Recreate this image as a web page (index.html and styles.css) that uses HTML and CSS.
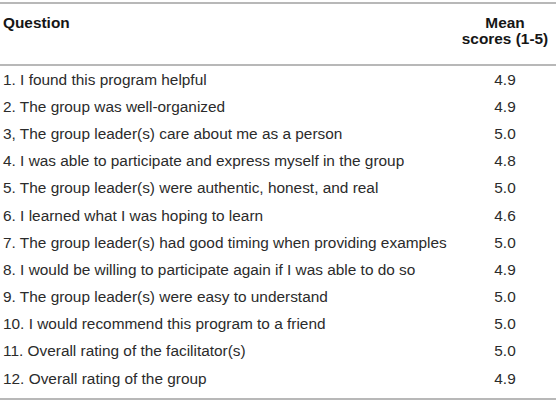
FILE: index.html
```html
<!DOCTYPE html>
<html>
<head>
<meta charset="utf-8">
<link rel="stylesheet" href="styles.css">
</head>
<body>
<table class="scores">
  <thead>
    <tr>
      <th class="q">Question</th>
      <th class="m">Mean<br>scores (1-5)</th>
    </tr>
  </thead>
  <tbody>
    <tr><td class="q">1. I found this program helpful</td><td class="m">4.9</td></tr>
    <tr><td class="q">2. The group was well-organized</td><td class="m">4.9</td></tr>
    <tr><td class="q">3, The group leader(s) care about me as a person</td><td class="m">5.0</td></tr>
    <tr><td class="q">4. I was able to participate and express myself in the group</td><td class="m">4.8</td></tr>
    <tr><td class="q">5. The group leader(s) were authentic, honest, and real</td><td class="m">5.0</td></tr>
    <tr><td class="q">6. I learned what I was hoping to learn</td><td class="m">4.6</td></tr>
    <tr><td class="q">7. The group leader(s) had good timing when providing examples</td><td class="m">5.0</td></tr>
    <tr><td class="q">8. I would be willing to participate again if I was able to do so</td><td class="m">4.9</td></tr>
    <tr><td class="q">9. The group leader(s) were easy to understand</td><td class="m">5.0</td></tr>
    <tr><td class="q">10. I would recommend this program to a friend</td><td class="m">5.0</td></tr>
    <tr><td class="q">11. Overall rating of the facilitator(s)</td><td class="m">5.0</td></tr>
    <tr><td class="q">12. Overall rating of the group</td><td class="m">4.9</td></tr>
  </tbody>
</table>
</body>
</html>
```

FILE: styles.css
```css
html, body {
  margin: 0;
  padding: 0;
  background: #ffffff;
}

body {
  padding-top: 2px;
  font-family: "Liberation Sans", Arial, Helvetica, sans-serif;
  font-size: 15.4px;
  color: #2b2b2b;
}

.scores {
  width: 100%;
  border-collapse: collapse;
  border-top: 2px solid #b8b8b8;
  border-bottom: 2px solid #b8b8b8;
}

.scores th {
  font-weight: bold;
  color: #161616;
  line-height: 16px;
  padding: 11px 3px 17px 3px;
  vertical-align: top;
  border-bottom: 2px solid #b8b8b8;
}

.scores td {
  line-height: 17px;
  padding: 4.6px 3px 5.6px 3px;
}

.scores tbody tr:last-child td {
  padding-bottom: 11px;
}

.scores .q {
  text-align: left;
}

.scores .m {
  text-align: center;
  width: 96px;
}
```
